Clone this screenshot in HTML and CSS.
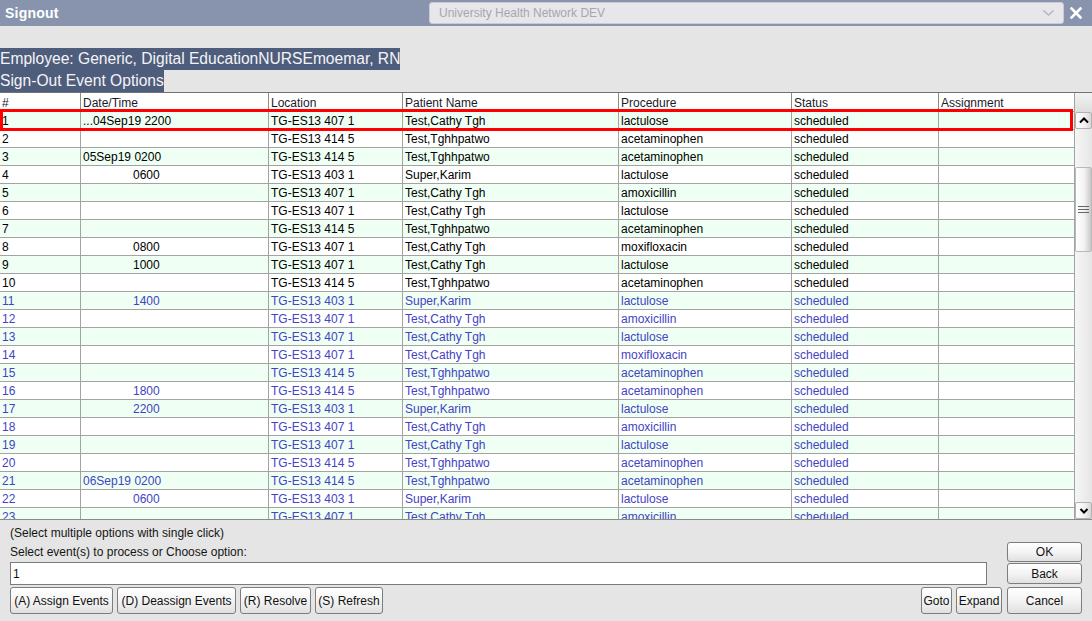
FILE: index.html
```html
<!DOCTYPE html>
<html>
<head>
<meta charset="utf-8">
<link rel="stylesheet" href="styles.css">
</head>
<body>
<div class="window">
  <div class="titlebar">
    <div class="title">Signout</div>
    <div class="combo">
      <span class="combo-text">University Health Network DEV</span>
      <svg class="combo-arrow" width="11" height="6" viewBox="0 0 11 6"><path d="M0.5 0.5 L5.5 5 L10.5 0.5" fill="none" stroke="#b4b4bc" stroke-width="1.4"/></svg>
    </div>
    <div class="close">
      <svg width="12" height="12" viewBox="0 0 12 12"><path d="M1.5 1.5 L10.5 10.5 M10.5 1.5 L1.5 10.5" stroke="#ffffff" stroke-width="2.6" stroke-linecap="square"/></svg>
    </div>
  </div>

  <div class="labels">
    <div class="hl">Employee: Generic, Digital EducationNURSEmoemar, RN</div>
    <div class="hl">Sign-Out Event Options</div>
  </div>

  <div class="grid-area">
    <div class="grid">
      <div class="row head">
        <div class="c">#</div><div class="c">Date/Time</div><div class="c">Location</div><div class="c">Patient Name</div><div class="c">Procedure</div><div class="c">Status</div><div class="c">Assignment</div>
      </div>
      <div class="row odd"><div class="c">1</div><div class="c">...04Sep19 2200</div><div class="c">TG-ES13 407 1</div><div class="c">Test,Cathy Tgh</div><div class="c">lactulose</div><div class="c">scheduled</div><div class="c"></div></div>
      <div class="row"><div class="c">2</div><div class="c"></div><div class="c">TG-ES13 414 5</div><div class="c">Test,Tghhpatwo</div><div class="c">acetaminophen</div><div class="c">scheduled</div><div class="c"></div></div>
      <div class="row odd"><div class="c">3</div><div class="c">05Sep19 0200</div><div class="c">TG-ES13 414 5</div><div class="c">Test,Tghhpatwo</div><div class="c">acetaminophen</div><div class="c">scheduled</div><div class="c"></div></div>
      <div class="row"><div class="c">4</div><div class="c t">0600</div><div class="c">TG-ES13 403 1</div><div class="c">Super,Karim</div><div class="c">lactulose</div><div class="c">scheduled</div><div class="c"></div></div>
      <div class="row odd"><div class="c">5</div><div class="c"></div><div class="c">TG-ES13 407 1</div><div class="c">Test,Cathy Tgh</div><div class="c">amoxicillin</div><div class="c">scheduled</div><div class="c"></div></div>
      <div class="row"><div class="c">6</div><div class="c"></div><div class="c">TG-ES13 407 1</div><div class="c">Test,Cathy Tgh</div><div class="c">lactulose</div><div class="c">scheduled</div><div class="c"></div></div>
      <div class="row odd"><div class="c">7</div><div class="c"></div><div class="c">TG-ES13 414 5</div><div class="c">Test,Tghhpatwo</div><div class="c">acetaminophen</div><div class="c">scheduled</div><div class="c"></div></div>
      <div class="row"><div class="c">8</div><div class="c t">0800</div><div class="c">TG-ES13 407 1</div><div class="c">Test,Cathy Tgh</div><div class="c">moxifloxacin</div><div class="c">scheduled</div><div class="c"></div></div>
      <div class="row odd"><div class="c">9</div><div class="c t">1000</div><div class="c">TG-ES13 407 1</div><div class="c">Test,Cathy Tgh</div><div class="c">lactulose</div><div class="c">scheduled</div><div class="c"></div></div>
      <div class="row"><div class="c">10</div><div class="c"></div><div class="c">TG-ES13 414 5</div><div class="c">Test,Tghhpatwo</div><div class="c">acetaminophen</div><div class="c">scheduled</div><div class="c"></div></div>
      <div class="row odd blue"><div class="c">11</div><div class="c t">1400</div><div class="c">TG-ES13 403 1</div><div class="c">Super,Karim</div><div class="c">lactulose</div><div class="c">scheduled</div><div class="c"></div></div>
      <div class="row blue"><div class="c">12</div><div class="c"></div><div class="c">TG-ES13 407 1</div><div class="c">Test,Cathy Tgh</div><div class="c">amoxicillin</div><div class="c">scheduled</div><div class="c"></div></div>
      <div class="row odd blue"><div class="c">13</div><div class="c"></div><div class="c">TG-ES13 407 1</div><div class="c">Test,Cathy Tgh</div><div class="c">lactulose</div><div class="c">scheduled</div><div class="c"></div></div>
      <div class="row blue"><div class="c">14</div><div class="c"></div><div class="c">TG-ES13 407 1</div><div class="c">Test,Cathy Tgh</div><div class="c">moxifloxacin</div><div class="c">scheduled</div><div class="c"></div></div>
      <div class="row odd blue"><div class="c">15</div><div class="c"></div><div class="c">TG-ES13 414 5</div><div class="c">Test,Tghhpatwo</div><div class="c">acetaminophen</div><div class="c">scheduled</div><div class="c"></div></div>
      <div class="row blue"><div class="c">16</div><div class="c t">1800</div><div class="c">TG-ES13 414 5</div><div class="c">Test,Tghhpatwo</div><div class="c">acetaminophen</div><div class="c">scheduled</div><div class="c"></div></div>
      <div class="row odd blue"><div class="c">17</div><div class="c t">2200</div><div class="c">TG-ES13 403 1</div><div class="c">Super,Karim</div><div class="c">lactulose</div><div class="c">scheduled</div><div class="c"></div></div>
      <div class="row blue"><div class="c">18</div><div class="c"></div><div class="c">TG-ES13 407 1</div><div class="c">Test,Cathy Tgh</div><div class="c">amoxicillin</div><div class="c">scheduled</div><div class="c"></div></div>
      <div class="row odd blue"><div class="c">19</div><div class="c"></div><div class="c">TG-ES13 407 1</div><div class="c">Test,Cathy Tgh</div><div class="c">lactulose</div><div class="c">scheduled</div><div class="c"></div></div>
      <div class="row blue"><div class="c">20</div><div class="c"></div><div class="c">TG-ES13 414 5</div><div class="c">Test,Tghhpatwo</div><div class="c">acetaminophen</div><div class="c">scheduled</div><div class="c"></div></div>
      <div class="row odd blue"><div class="c">21</div><div class="c">06Sep19 0200</div><div class="c">TG-ES13 414 5</div><div class="c">Test,Tghhpatwo</div><div class="c">acetaminophen</div><div class="c">scheduled</div><div class="c"></div></div>
      <div class="row blue"><div class="c">22</div><div class="c t">0600</div><div class="c">TG-ES13 403 1</div><div class="c">Super,Karim</div><div class="c">lactulose</div><div class="c">scheduled</div><div class="c"></div></div>
      <div class="row odd blue"><div class="c">23</div><div class="c"></div><div class="c">TG-ES13 407 1</div><div class="c">Test,Cathy Tgh</div><div class="c">amoxicillin</div><div class="c">scheduled</div><div class="c"></div></div>
      <div class="selection"></div>
    </div>
    <div class="vscroll">
      <div class="corner"></div>
      <div class="sbtn">
        <svg width="10" height="7" viewBox="0 0 10 7"><path d="M1 5.5 L5 1.5 L9 5.5" fill="none" stroke="#000" stroke-width="2"/></svg>
      </div>
      <div class="track">
        <div class="thumb">
          <svg width="11" height="8" viewBox="0 0 11 8"><path d="M0 0.5 H11 M0 3.5 H11 M0 6.5 H11" stroke="#666" stroke-width="1"/></svg>
        </div>
      </div>
      <div class="sbtn">
        <svg width="10" height="7" viewBox="0 0 10 7"><path d="M1.5 2 L5 5.5 L8.5 2" fill="none" stroke="#000" stroke-width="2"/></svg>
      </div>
    </div>
  </div>

  <div class="bottom">
    <div class="left">
      <div class="note first">(Select multiple options with single click)</div>
      <div class="note">Select event(s) to process or Choose option:</div>
      <input class="entry" type="text" value="1">
      <div class="btnrow">
        <button class="btn b-assign">(A) Assign Events</button>
        <button class="btn b-deassign">(D) Deassign Events</button>
        <button class="btn b-resolve">(R) Resolve</button>
        <button class="btn b-refresh">(S) Refresh</button>
        <div class="spacer"></div>
        <button class="btn b-goto">Goto</button>
        <button class="btn b-expand">Expand</button>
      </div>
    </div>
    <div class="right">
      <button class="btn ok">OK</button>
      <button class="btn back">Back</button>
      <button class="btn cancel">Cancel</button>
    </div>
  </div>
</div>
</body>
</html>
```

FILE: styles.css
```css
* { box-sizing: border-box; }

html, body {
  margin: 0;
  padding: 0;
}

body {
  width: 1092px;
  height: 621px;
  overflow: hidden;
  background: #e5e5e5;
  font-family: "Liberation Sans", Arial, sans-serif;
  font-size: 12px;
  color: #111;
}

.window {
  width: 1092px;
  height: 621px;
  display: flex;
  flex-direction: column;
}

/* Title bar */
.titlebar {
  height: 26px;
  background: #8894ad;
  display: flex;
  align-items: center;
  flex-shrink: 0;
}

.title {
  flex: 1;
  padding-left: 5px;
  color: #ffffff;
  font-weight: bold;
  font-size: 14px;
  letter-spacing: 0.2px;
}

.combo {
  width: 635px;
  height: 22px;
  background: #e6e6eb;
  border: 1px solid #c9cad3;
  border-radius: 3px;
  display: flex;
  align-items: center;
  padding: 0 9px 0 9px;
}

.combo-text {
  flex: 1;
  color: #a6a6ad;
  font-size: 12px;
}

.combo-arrow {
  display: block;
}

.close {
  width: 24px;
  margin-right: 4px;
  display: flex;
  justify-content: center;
  align-items: center;
}

.close svg { display: block; }

/* Labels */
.labels {
  margin-top: 22px;
  flex-shrink: 0;
}

.hl {
  width: fit-content;
  background: #4f5d7c;
  color: #f4f4f6;
  font-size: 15.6px;
  line-height: 22px;
  height: 22px;
  white-space: nowrap;
}

/* Grid */
.grid-area {
  height: 428px;
  flex-shrink: 0;
  display: flex;
  border-top: 1px solid #727272;
  border-bottom: 1px solid #8a8a8a;
  background: #ffffff;
}

.grid {
  position: relative;
  width: 1074px;
  overflow: hidden;
}

.row {
  display: grid;
  grid-template-columns: 80px 188px 134px 216px 173px 147px 136px;
  height: 18px;
  border-bottom: 1px solid #a3a3a3;
  background: #ffffff;
  color: #000;
}

.row.odd { background: #effff3; }

.row.blue { color: #4343c3; }

.row.head {
  height: 19px;
  background: #ffffff;
  color: #1a1a2a;
}

.c {
  padding-left: 2px;
  padding-top: 1px;
  line-height: 17px;
  white-space: nowrap;
  overflow: hidden;
}

.row.head .c { line-height: 18px; border-left-color: #8c8c8c; }

.c + .c { border-left: 1px solid #a3a3a3; }

.c.t { padding-left: 52px; }

.selection {
  position: absolute;
  left: 0;
  top: 16px;
  width: 1073px;
  height: 22px;
  border: 3px solid #ff0000;
  pointer-events: none;
}

/* Scrollbar */
.vscroll {
  width: 18px;
  border-left: 1px solid #a3a3a3;
  display: flex;
  flex-direction: column;
  background: #e4e4e4;
}

.corner {
  height: 19px;
  background: linear-gradient(#f2f2f2, #dedede);
  flex-shrink: 0;
}

.sbtn {
  height: 17px;
  flex-shrink: 0;
  border: 1px solid #b2b2b2;
  border-radius: 2px;
  background: linear-gradient(90deg, #ffffff, #f0f0f0 60%, #d6d6d6);
  display: flex;
  align-items: center;
  justify-content: center;
}

.sbtn svg { display: block; }

.track {
  flex: 1;
  background: linear-gradient(90deg, #f6f6f6, #e6e6e6);
  padding-top: 38px;
}

.thumb {
  height: 85px;
  border: 1px solid #b8b8b8;
  border-radius: 2px;
  background: linear-gradient(90deg, #ffffff, #f2f2f2 55%, #c9c9c9);
  display: flex;
  align-items: center;
  justify-content: center;
}

.thumb svg { display: block; }

/* Bottom */
.bottom {
  flex: 1;
  display: flex;
  gap: 5px;
  padding: 0 10px;
}

.left {
  flex: 1;
  display: flex;
  flex-direction: column;
}

.note {
  height: 19px;
  padding-top: 1px;
  line-height: 18px;
  color: #151515;
  white-space: nowrap;
}

.note.first { margin-top: 3px; }

.entry {
  margin-top: 1px;
  margin-right: 15px;
  height: 23px;
  border: 1px solid #7a7a7a;
  background: #ffffff;
  font-family: "Liberation Sans", Arial, sans-serif;
  font-size: 12px;
  color: #111;
  padding: 1px 2px 0;
  outline: none;
}

.btnrow {
  margin-top: 2px;
  height: 27px;
  display: flex;
  gap: 4px;
}

.spacer { flex: 1; }

.btn {
  height: 27px;
  padding: 0;
  font-family: "Liberation Sans", Arial, sans-serif;
  font-size: 12px;
  color: #111;
  border: 1px solid #7d7d7d;
  border-radius: 3px;
  background: linear-gradient(#ffffff, #f4f4f4 50%, #e0e0e0);
  white-space: nowrap;
}

.b-assign { width: 103px; }
.b-deassign { width: 119px; }
.b-resolve { width: 71px; }
.b-refresh { width: 68px; }
.b-goto { width: 31px; }
.b-expand { width: 46px; }

.right {
  width: 75px;
  display: flex;
  flex-direction: column;
  padding-top: 22px;
}

.right .btn { width: 75px; }

.btn.ok { height: 20px; }
.btn.back { height: 21px; margin-top: 1px; }
.btn.cancel { height: 27px; margin-top: 3px; }
```
